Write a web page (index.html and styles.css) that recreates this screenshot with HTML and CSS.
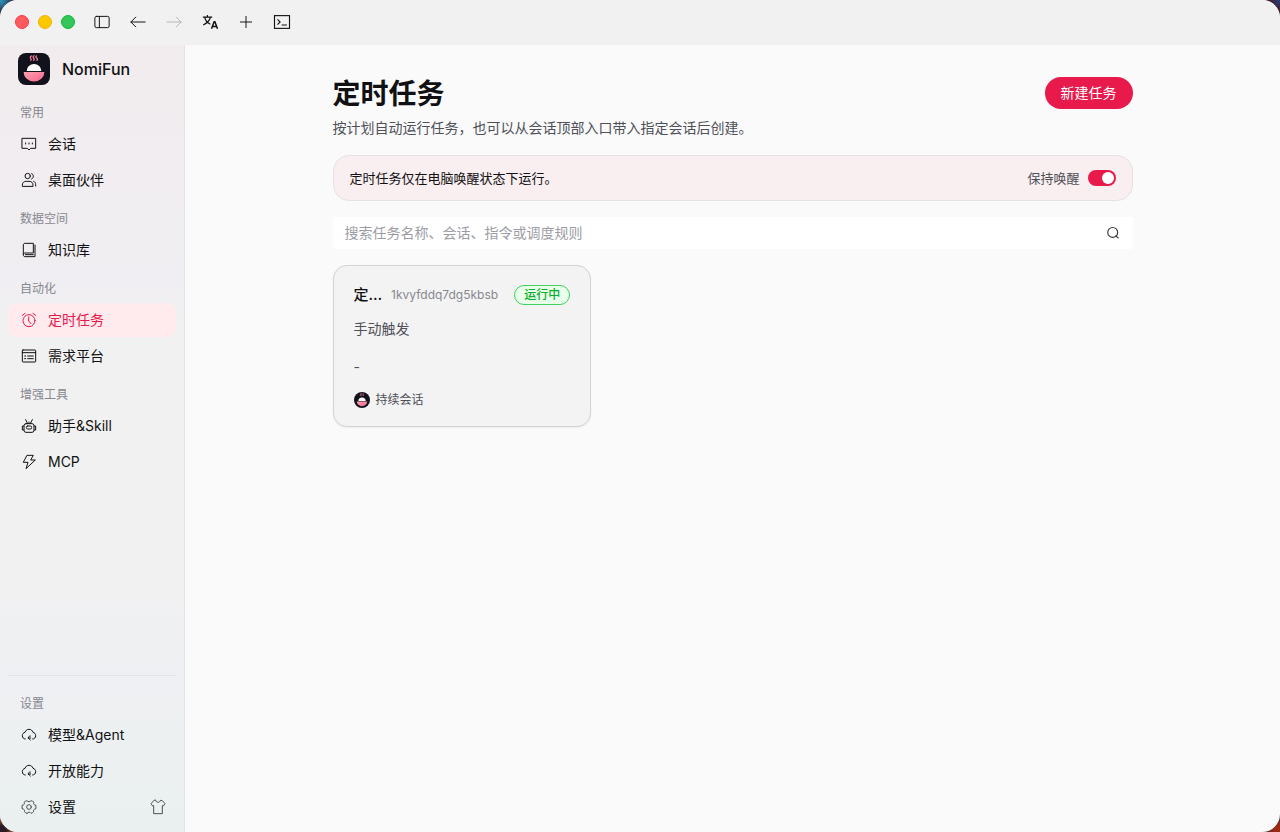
FILE: index.html
```
<!DOCTYPE html>
<html lang="zh-CN">
<head>
    <meta charset="UTF-8">
    <meta name="viewport" content="width=device-width, initial-scale=1.0">
    <title>定时任务 - NomiFun</title>
    <link rel="stylesheet" href="styles.css">
</head>
<body>

    <!-- Logo compartido -->
    <svg class="defs" width="0" height="0" aria-hidden="true">
        <defs>
            <linearGradient id="bowl" x1="0" y1="0" x2="1" y2="1">
                <stop offset="0" stop-color="#ffa0b0"/>
                <stop offset="1" stop-color="#f8668a"/>
            </linearGradient>
            <symbol id="logo" viewBox="0 0 32 32">
                <rect width="32" height="32" fill="#12121c"/>
                <path d="M13.6 3q-2 .8-1 2.2t.2 2.2M16 2.8q-1.6 1-.4 2.2t0 2.4M18.4 3q-1.2 1 .2 2t.4 2.4" fill="none" stroke="#f08098" stroke-width="1.3" stroke-linecap="round"/>
                <path d="M8.7 18a7.3 7 0 0 1 14.6 0z" fill="#fff"/>
                <path d="M5.6 19h20.8a10.4 9.4 0 0 1-20.8 0z" fill="url(#bowl)"/>
            </symbol>
        </defs>
    </svg>

    <div class="window">
        <header class="titlebar">
            <div class="lights">
                <span class="light light-close"></span>
                <span class="light light-min"></span>
                <span class="light light-max"></span>
            </div>
            <div class="tools">
                <button class="tool" aria-label="侧边栏">
                    <svg class="icon icon-thin" viewBox="0 0 48 48"><rect x="5" y="9" width="38" height="30" rx="4"/><path d="M17 9v30"/></svg>
                </button>
                <button class="tool" aria-label="后退">
                    <svg class="icon icon-thin" viewBox="0 0 48 48"><path d="M43 24H5M18 11L5 24l13 13"/></svg>
                </button>
                <button class="tool" aria-label="前进" disabled>
                    <svg class="icon icon-thin" viewBox="0 0 48 48"><path d="M5 24h38M30 11l13 13-13 13"/></svg>
                </button>
                <button class="tool" aria-label="语言">
                    <svg class="icon icon-sharp" viewBox="0 0 48 48"><path d="M28 42l7-19h2l7 19M31 36h10" stroke-width="4"/><path d="M5 11h25M17 5v6M10 12c2 8 7 14 15 18M25 12C23 20 16 27 6 32"/></svg>
                </button>
                <button class="tool" aria-label="新建">
                    <svg class="icon icon-thin" viewBox="0 0 48 48"><path d="M24 9v30M9 24h30"/></svg>
                </button>
                <button class="tool" aria-label="终端">
                    <svg class="icon icon-sharp" viewBox="0 0 48 48"><rect x="4" y="7" width="40" height="34"/><path d="M12 17l7 7-7 7M23 32h14"/></svg>
                </button>
            </div>
        </header>

        <div class="body">
            <aside class="sidebar">
                <div class="brand">
                    <svg class="brand-logo"><use href="#logo"/></svg>
                    <span>NomiFun</span>
                </div>

                <nav class="nav">
                    <h2 class="nav-label">常用</h2>
                    <a class="nav-item" href="#">
                        <svg class="icon" viewBox="0 0 48 48"><path d="M4 7h40v30H29l-5 5-5-5H4z"/><path d="M14 21v3M24 21v3M34 21v3"/></svg>
                        会话
                    </a>
                    <a class="nav-item" href="#">
                        <svg class="icon" viewBox="0 0 48 48"><circle cx="20" cy="12" r="8"/><path d="M4 42v-2c0-8 4-12 12-12h8c8 0 12 4 12 12v2zM32 5c6 2 8 12 0 16M38 28c4 1 6 5 6 10v4"/></svg>
                        桌面伙伴
                    </a>
                    <h2 class="nav-label">数据空间</h2>
                    <a class="nav-item" href="#">
                        <svg class="icon" viewBox="0 0 48 48"><path d="M7 37V9c0-3 2-5 5-5h25v29H11c-2 0-4 2-4 5 0 4 2 6 5 6h30V9"/><path d="M13 38h24"/></svg>
                        知识库
                    </a>
                    <h2 class="nav-label">自动化</h2>
                    <a class="nav-item active" href="#">
                        <svg class="icon" viewBox="0 0 48 48"><circle cx="24" cy="26" r="18"/><path d="M23 15v12l7 8M4 10l8-6M44 10l-8-6"/></svg>
                        定时任务
                    </a>
                    <a class="nav-item" href="#">
                        <svg class="icon" viewBox="0 0 48 48"><rect x="4" y="6" width="40" height="36" rx="2"/><path d="M4 14h40M20 24h17M20 32h17M11 24h3M11 32h3"/></svg>
                        需求平台
                    </a>
                    <h2 class="nav-label">增强工具</h2>
                    <a class="nav-item" href="#">
                        <svg class="icon" viewBox="0 0 48 48"><rect x="9" y="17" width="30" height="26" rx="6"/><rect x="16" y="24" width="16" height="9" rx="4"/><path d="M20 17L14 5M28 17l6-12M24 17v-5M9 24H4v12h5M39 24h5v12h-5"/></svg>
                        助手&amp;Skill
                    </a>
                    <a class="nav-item" href="#">
                        <svg class="icon" viewBox="0 0 48 48"><path d="M19 4h18l-8 14h14L15 44l6-19H8z"/></svg>
                        MCP
                    </a>
                </nav>

                <nav class="nav nav-bottom">
                    <h2 class="nav-label">设置</h2>
                    <a class="nav-item" href="#">
                        <svg class="icon" viewBox="0 0 48 48"><path d="M13 36C8 36 4 32 4 26s4-9 8-10c2-6 6-9 12-9s10 3 12 9c4 1 8 4 8 10s-4 10-9 10M22 33c0-4 2-6 6-6M22 33l6 6M22 33h7"/></svg>
                        模型&amp;Agent
                    </a>
                    <a class="nav-item" href="#">
                        <svg class="icon" viewBox="0 0 48 48"><path d="M13 36C8 36 4 32 4 26s4-9 8-10c2-6 6-9 12-9s10 3 12 9c4 1 8 4 8 10s-4 10-9 10M22 33c0-4 2-6 6-6M22 33l6 6M22 33h7"/></svg>
                        开放能力
                    </a>
                    <div class="nav-row">
                        <a class="nav-item" href="#">
                            <svg class="icon icon-soft" viewBox="0 0 48 48"><path d="M18 43a19 19 0 0 1-8-5c2-4 0-8-6-8a19 19 0 0 1 0-12c6 0 8-4 5-8a19 19 0 0 1 9-5c2 4 10 4 12 0a19 19 0 0 1 9 5c-3 4-1 8 5 8a19 19 0 0 1 0 12c-6 0-8 4-6 8a19 19 0 0 1-8 5c-3-5-9-5-12 0z"/><circle cx="24" cy="24" r="7"/></svg>
                            设置
                        </a>
                        <button class="tool" aria-label="主题">
                            <svg class="icon icon-soft" viewBox="0 0 48 48"><path d="M17 4c1 8 13 8 14 0l6 1 8 9-5 7-3-1v24H11V20l-3 1-5-7 8-9z"/></svg>
                        </button>
                    </div>
                </nav>
            </aside>

            <main class="main">
                <div class="page">
                    <div class="page-head">
                        <div>
                            <h1>定时任务</h1>
                            <p>按计划自动运行任务，也可以从会话顶部入口带入指定会话后创建。</p>
                        </div>
                        <button class="btn-primary">新建任务</button>
                    </div>

                    <div class="notice">
                        <span>定时任务仅在电脑唤醒状态下运行。</span>
                        <label class="switch-label" for="awake">
                            保持唤醒
                            <input class="switch" type="checkbox" id="awake" checked>
                        </label>
                    </div>

                    <div class="search">
                        <input type="text" aria-label="搜索任务" placeholder="搜索任务名称、会话、指令或调度规则">
                        <svg class="icon icon-search" viewBox="0 0 48 48"><circle cx="23" cy="22" r="17"/><path d="M34 34l8 7"/></svg>
                    </div>

                    <div class="cards">
                        <article class="card">
                            <div class="card-head">
                                <h3>定时任务</h3>
                                <span class="card-id">1kvyfddq7dg5kbsb</span>
                                <span class="badge">运行中</span>
                            </div>
                            <p class="card-rule">手动触发</p>
                            <p class="card-next">-</p>
                            <div class="card-foot">
                                <svg class="avatar"><use href="#logo"/></svg>
                                持续会话
                            </div>
                        </article>
                    </div>
                </div>
            </main>
        </div>
    </div>

</body>
</html>
```
FILE: styles.css
```
* {
    margin: 0;
    padding: 0;
    box-sizing: border-box;
}

body {
    font-family: Inter, "Noto Sans CJK SC", sans-serif;
    font-size: 14px;
    line-height: 22px;
    color: #111113;
    background:
        radial-gradient(circle at 0 0, #2b8fb0 2px, #33304f 12px, transparent 60px),
        radial-gradient(circle at 0 100%, #2a1a25 6px, #c8763a 16px, transparent 60px),
        radial-gradient(circle at 100% 100%, #9c2a12 6px, #1d3350 18px, transparent 60px),
        radial-gradient(circle at 100% 0, #2a3a70 2px, #4a1622 12px, transparent 60px),
        #2a2433;
}

button, input {
    font: inherit;
    color: inherit;
}

button {
    border: none;
    background: none;
    cursor: pointer;
}

a {
    color: inherit;
    text-decoration: none;
}

.defs {
    position: absolute;
}

.icon {
    width: 16px;
    height: 16px;
    flex: none;
    fill: none;
    stroke: currentColor;
    stroke-width: 3;
    stroke-linejoin: round;
    stroke-linecap: round;
}

.icon-thin {
    width: 18px;
    height: 18px;
    stroke-width: 2.6;
}

.icon-sharp {
    width: 18px;
    height: 18px;
    stroke-linejoin: miter;
    stroke-linecap: butt;
}

.icon-soft {
    color: #4e5058;
}

.window {
    display: flex;
    flex-direction: column;
    min-height: 100vh;
    border-radius: 18px;
    overflow: hidden;
    background: #fafafa;
}

/* Barra superior */
.titlebar {
    display: flex;
    align-items: center;
    gap: 13px;
    height: 45px;
    padding: 0 15px 1px;
    background: #f1f1f1;
}

.lights {
    display: flex;
    gap: 9px;
}

.light {
    width: 14px;
    height: 14px;
    border-radius: 50%;
    border: 1px solid;
}

.light-close {
    background: #ff5a5f;
    border-color: #f53a44;
}

.light-min {
    background: #fcc800;
    border-color: #f0b400;
}

.light-max {
    background: #32c758;
    border-color: #10b836;
}

.tools {
    display: flex;
    gap: 8px;
}

.tool {
    display: flex;
    align-items: center;
    justify-content: center;
    width: 28px;
    height: 28px;
}

.tool:disabled {
    color: #b4b4b6;
}

.body {
    display: flex;
    flex: 1;
}

/* Menu lateral */
.sidebar {
    display: flex;
    flex-direction: column;
    width: 185px;
    flex: none;
    padding: 8px;
    border-right: 1px solid #e2e3e6;
    background: linear-gradient(#f2ecee 0, #f0eef2 30%, #f1f1f1 36%, #f1f1f1 65%, #eff0f3 80%, #eaf0ef 100%);
}

.brand {
    display: flex;
    align-items: center;
    gap: 12px;
    padding: 0 10px;
    margin-bottom: 6px;
    font-size: 16px;
    font-weight: 500;
}

.brand-logo {
    width: 32px;
    height: 32px;
    border-radius: 8px;
}

.nav {
    display: flex;
    flex-direction: column;
    gap: 2px;
}

.nav-bottom {
    margin-top: auto;
    padding-top: 6px;
    border-top: 1px solid #e2e3e6;
}

.nav-label {
    padding: 11px 12px 5px;
    margin-bottom: -2px;
    font-size: 12px;
    line-height: 18px;
    font-weight: 400;
    color: #86888f;
}

.nav-label:first-child {
    padding-top: 13px;
}

.nav-item {
    display: flex;
    align-items: center;
    gap: 11px;
    height: 34px;
    padding: 0 13px;
    border-radius: 8px;
}

.nav-item.active {
    background: #ffeaee;
    color: #e8194b;
}

.nav-row {
    display: flex;
    align-items: center;
    justify-content: space-between;
    padding-right: 4px;
}

/* Contenido */
.main {
    flex: 1;
    min-width: 0;
    padding: 32px 24px;
}

.page {
    display: flex;
    flex-direction: column;
    gap: 16px;
    max-width: 800px;
    margin: 0 auto;
}

.page-head {
    display: flex;
    align-items: flex-start;
    justify-content: space-between;
}

h1 {
    font-size: 28px;
    line-height: 34px;
    font-weight: 700;
    margin-bottom: 6px;
}

.page-head p {
    color: #4e5058;
}

.btn-primary {
    height: 32px;
    padding: 0 16px;
    border-radius: 16px;
    background: #e8194b;
    color: #fff;
}

.notice {
    display: flex;
    align-items: center;
    justify-content: space-between;
    padding: 11px 16px;
    border: 1px solid #e4e2e5;
    border-radius: 16px;
    background: #f9eef0;
    font-size: 13px;
}

.switch-label {
    display: flex;
    align-items: center;
    gap: 8px;
    color: #4e5058;
}

.switch {
    appearance: none;
    display: flex;
    justify-content: flex-end;
    width: 28px;
    height: 16px;
    padding: 2px;
    border-radius: 8px;
    background: #e8194b;
}

.switch::before {
    content: "";
    width: 12px;
    height: 12px;
    border-radius: 50%;
    background: #fff;
}

.switch:not(:checked) {
    justify-content: flex-start;
    background: #c9cdd4;
}

.search {
    display: flex;
    align-items: center;
    height: 32px;
    padding: 0 13px 0 12px;
    border-radius: 2px;
    background: #fff;
}

.search input {
    flex: 1;
    min-width: 0;
    border: none;
    outline: none;
    background: none;
}

.search input::placeholder {
    color: #9c9da4;
}

.icon-search {
    width: 14px;
    height: 14px;
    stroke-width: 4;
    color: #3c3d42;
}

.cards {
    display: grid;
    grid-template-columns: repeat(auto-fill, minmax(240px, 1fr));
    gap: 12px;
}

.card {
    padding: 19px 20px 16px;
    border: 1px solid #d2d3d6;
    border-radius: 14px;
    background: #f3f3f3;
    box-shadow: 0 1px 2px rgba(0, 0, 0, 0.06);
    color: #4e5058;
}

.card-head {
    display: flex;
    align-items: center;
    margin-bottom: 13px;
}

.card-head h3 {
    flex: 1;
    min-width: 0;
    overflow: hidden;
    white-space: nowrap;
    text-overflow: ellipsis;
    font-size: 15px;
    line-height: 20px;
    font-weight: 500;
    color: #111113;
}

.card-id {
    margin: 0 16px 0 8px;
    font-size: 12px;
    line-height: 20px;
    color: #86888f;
}

.badge {
    height: 20px;
    padding: 0 9px;
    border: 1px solid #3fd060;
    border-radius: 10px;
    background: #e8ffea;
    color: #0aac2e;
    font-size: 12px;
    line-height: 18px;
    font-weight: 500;
}

.card-rule {
    margin-bottom: 16px;
}

.card-next {
    margin-bottom: 12px;
}

.card-foot {
    display: flex;
    align-items: center;
    gap: 6px;
    font-size: 12px;
    line-height: 20px;
}

.avatar {
    width: 16px;
    height: 16px;
    border-radius: 50%;
}
```
